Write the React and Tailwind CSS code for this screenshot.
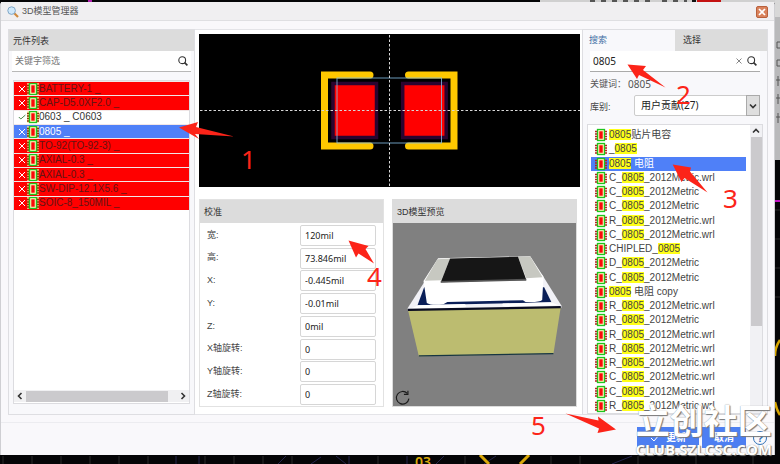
import React from "react";

const SANS = "font-['Liberation_Sans','Noto_Sans_CJK_SC',sans-serif]";
const HUMAN = "font-['Noto_Sans','Noto_Sans_CJK_SC',sans-serif]";

const parts = [
  { name: "BATTERY-1 _", state: "bad" },
  { name: "CAP-D5.0XF2.0 _", state: "bad" },
  { name: "0603 _ C0603", state: "ok" },
  { name: "0805 _", state: "active" },
  { name: "TO-92(TO-92-3) _", state: "bad" },
  { name: "AXIAL-0.3 _", state: "bad" },
  { name: "AXIAL-0.3 _", state: "bad" },
  { name: "SW-DIP-12.1X5.6 _", state: "bad" },
  { name: "SOIC-8_150MIL _", state: "bad" },
];

const rowTone = {
  bad: "bg-[#ff0000] text-[#641414]",
  ok: "bg-white text-[#333]",
  active: "bg-[#4f80f8] text-white",
};

const models = [
  ["", "贴片电容"],
  ["_", ""],
  ["", " 电阻"],
  ["C_", "_2012Metric.wrl"],
  ["C_", "_2012Metric"],
  ["C_", "_2012Metric"],
  ["R_", "_2012Metric.wrl"],
  ["C_", "_2012Metric.wrl"],
  ["CHIPLED_", ""],
  ["D_", "_2012Metric"],
  ["C_", "_2012Metric"],
  ["", " 电阻 copy"],
  ["R_", "_2012Metric.wrl"],
  ["R_", "_2012Metric"],
  ["R_", "_2012Metric.wrl"],
  ["R_", "_2012Metric.wrl"],
  ["R_", "_2012Metric.wrl"],
  ["C_", "_2012Metric.wrl"],
  ["C_", "_2012Metric.wrl"],
  ["R_", "_2012Metric.wrl"],
];

const fields = [
  ["宽:", "120mil"],
  ["高:", "73.846mil"],
  ["X:", "-0.445mil"],
  ["Y:", "-0.01mil"],
  ["Z:", "0mil"],
  ["X轴旋转:", "0"],
  ["Y轴旋转:", "0"],
  ["Z轴旋转:", "0"],
];

function Chip({ hollow }) {
  return (
    <svg viewBox="0 0 12 14" className="h-[14px] w-3 shrink-0" aria-hidden="true">
      {hollow && <rect y="1" width="12" height="12" fill="#ffe9a0" opacity=".7" />}
      <path d="M0 3.500h12M0 6h12M0 8.500h12M0 11h12" stroke={hollow ? "#8a3a00" : "#b5201c"} strokeWidth="1.300" />
      <rect x="2.500" y="1.500" width="7" height="11" fill="#fbf6b4" stroke="#1fc41f" strokeWidth="1.300" />
      <rect x="4.300" y="3.300" width="3.400" height="7.400" fill="#fa0a0a" />
    </svg>
  );
}

function Magnifier() {
  return (
    <svg viewBox="0 0 10 10" className="h-[10px] w-[10px] shrink-0" fill="none" stroke="#333" aria-hidden="true">
      <circle cx="4.200" cy="4.200" r="3.400" strokeWidth="1.100" />
      <path d="M6.600 6.600L9.400 9.400" strokeWidth="1.600" />
    </svg>
  );
}

function Chevron({ d, className }) {
  return (
    <svg viewBox="0 0 8 8" className={"h-2 w-2 " + className} fill="none" stroke="#333" strokeWidth="1.600" aria-hidden="true">
      <path d={d} />
    </svg>
  );
}

function Backdrop() {
  return (
    <svg className="absolute inset-0 h-full w-full" viewBox="0 0 780 464" preserveAspectRatio="none" aria-hidden="true">
      <rect width="780" height="464" fill="#050507" />
      <rect x="88" width="4" height="2" fill="#b020b0" />
      <rect x="540" width="240" height="3" fill="#d0d0d0" />
      <path d="M590 1h60M662 1h25" stroke="#555" strokeWidth="2" strokeDasharray="5 6" />
      <rect x="692" width="4" height="3" fill="#111" />
      <rect x="697" width="24" height="3" fill="#c41212" />
      <rect x="775" width="5" height="160" fill="#b9b9bb" />
      <rect x="775" width="5" height="17" fill="#d8d8d8" />
      <path d="M777 42h3M777 48h3M777 42v6M777 60h3M777 66h3M777 60v6M776 80h4M778 76v10M776 98h4M778 94v10M776 117h4M778 113v10" stroke="#555" />
      <path d="M775 201h5" stroke="#c313c3" strokeWidth="2" />
      <path d="M775 210h5M775 239h5M775 268h5M775 297h5M775 411h5" stroke="#2b2b2b" />
      <path d="M780 340Q775 347 775 356M775 402Q777 411 780 415" stroke="#d7a600" strokeWidth="2.500" fill="none" />
      <path d="M3 456v8M32 456v8M61 456v8M90 456v8M119 456v8M148 456v8M205 456v8M234 456v8M263 456v8M292 456v8M378 456v8M465 456v8M551 456v8M580 456v8M638 456v8M696 456v8M753 456v8" stroke="#2d2d2d" />
      <path d="M176 456v8M199 456v8M349 456v8M407 456v8M278 464l8-8M311 464l10-7M336 456l10 8M436 464l8-8M484 464l12-8M612 464l20-8" stroke="#26264e" />
      <path d="M480 455l9 9M520 464l9-9" stroke="#dba90a" strokeWidth="3" />
      <text x="415" y="467" fontFamily="Noto Sans, sans-serif" fontSize="14" fontWeight="600" fill="#dba90a">03</text>
    </svg>
  );
}

function PartList() {
  return (
    <section className="flex min-w-0 flex-col border border-[#dedee2] bg-[#f8f8fb]">
      <h2 className="h-[21px] bg-[#dcdcdc] pl-1 text-[9px] leading-[22px] text-[#333]">元件列表</h2>
      <div className="mx-[3px] flex h-[21px] items-center border-b border-[#b8b8b8] bg-white pr-[3px]">
        <input
          aria-label="关键字筛选"
          placeholder="关键字筛选"
          className="h-full min-w-0 flex-1 bg-transparent px-[3px] text-[9px] outline-none placeholder:text-[#777]"
        />
        <Magnifier />
      </div>
      <div className="mx-1 mt-2 mb-[10px] flex flex-1 flex-col border border-[#dcdce0] bg-white">
        <ul className="flex h-[129px] flex-col">
          {parts.map((p, i) => (
            <li key={i} className={"flex flex-1 items-center overflow-hidden border-t border-[#f2e6e6] text-[10px] leading-3 whitespace-pre " + rowTone[p.state]}>
              <svg viewBox="0 0 8 8" className="mr-px ml-1 h-2 w-2 shrink-0" fill="none" strokeWidth="1" stroke={p.state === "ok" ? "#4b8b4b" : "#fff"} aria-hidden="true">
                <path d={p.state === "ok" ? "M.8 4l2 2 4.600-4" : "M1 1l6 6M7 1l-6 6"} />
              </svg>
              <Chip hollow />
              {p.name}
            </li>
          ))}
        </ul>
        <div className="mt-auto mb-px flex h-3 items-center bg-[#f0f0f2]">
          <Chevron d="M5.500 1L2.500 4l3 3" className="mx-[2px]" />
          <div className="h-[11px] flex-1 bg-[#cbcacd]" />
          <Chevron d="M2.500 1l3 3-3 3" className="mr-[2px] ml-[11px]" />
        </div>
      </div>
    </section>
  );
}

function Footprint() {
  return (
    <svg viewBox="199 34 381 153" className="block w-full bg-black" role="img" aria-label="封装">
      <g fill="none" stroke="#ffc800" strokeWidth="7">
        <path d="M370 75H324.500V146H370" strokeLinecap="round" />
        <path d="M408.500 75H454V146H408.500" strokeLinecap="round" />
      </g>
      <g fill="#ff0000" stroke="#2b0430" strokeWidth="3.500">
        <rect x="333" y="83.500" width="43.500" height="54" />
        <rect x="402.700" y="83.500" width="43.500" height="54" />
      </g>
      <rect x="337" y="78" width="104.500" height="65" fill="none" stroke="#86bfe8" strokeOpacity=".8" />
      <path d="M200 110.500H580M389.500 35V187" stroke="#d8d8d8" strokeWidth="1" strokeDasharray="2.500 2" />
    </svg>
  );
}

function Calibration() {
  return (
    <section className="min-w-0 border border-[#e2e2e2] bg-white">
      <h2 className="h-[23px] bg-[#dcdcdc] pl-1 text-[9px] leading-6 text-[#333]">校准</h2>
      <div className="flex h-[183px] flex-col pt-px pr-[7px] pl-[7px]">
        {fields.map(([label, value], i) => (
          <div key={label} className="flex flex-1 items-center">
            <label htmlFor={"field" + i} className="flex-1 text-[9px] text-[#444]">{label}</label>
            <input
              id={"field" + i}
              defaultValue={value}
              className={"h-[21px] w-[76px] rounded-[2px] border border-[#d6d6d6] bg-white px-1 text-[9px] text-[#222] outline-none " + HUMAN}
            />
          </div>
        ))}
      </div>
    </section>
  );
}

function Preview() {
  return (
    <section className="min-w-0 border border-[#dcdcdc] bg-[#808080]">
      <h2 className="h-[23px] bg-[#dcdcdc] pl-1 text-[9px] leading-6 text-[#333]">3D模型预览</h2>
      <svg viewBox="24 86 552 552" className="block w-full" role="img" aria-label="3D模型预览">
        <rect x="24" y="86" width="552" height="552" fill="#808080" />
        <path d="M68 343L120 262L155 242H474L532 335V342L70 350Z" fill="#f1f1f6" />
        <path d="M98 334L118 280H480L502 325Z" fill="#0a1f58" />
        <path d="M100 334L240 330Q250 336 240 341L78 344ZM356 329L500 325L524 334L362 338Q348 334 356 329Z" fill="#fff" />
        <path d="M116 261L160 192L438 186L478 248L474 318Q465 326 424 324L416 319L188 324L176 331Q140 336 126 327Z" fill="#fff" />
        <path d="M120 260L158 195L196 193L170 259Z" fill="#c7c8c1" />
        <path d="M401 188L438 187L475 250L426 253Z" fill="#c7c8c1" />
        <path d="M196 193L401 188L426 257L168 265Z" fill="#161616" />
        <path d="M168 261L426 254V260L168 266Z" fill="#555" />
        <path d="M69 348L530 339L508 480L102 488Z" fill="#bcbc70" />
        <path d="M69 348L530 340" stroke="#080b20" strokeWidth="7" />
        <path d="M102 487L508 480" stroke="#173642" strokeWidth="4" />
        <g fill="none" stroke="#1b1b1b" strokeWidth="3.500">
          <path d="M67 600A19 19 0 1 0 72 616" />
          <path d="M69 592V603H57" />
        </g>
      </svg>
    </section>
  );
}

function SearchPanel() {
  return (
    <section className="flex min-w-0 flex-col border border-[#dedee2] bg-[#f8f8fb]">
      <div className="grid h-[21px] grid-cols-2 text-[9px]">
        <button className="pl-[6px] text-left text-[#3f6fa5]">搜索</button>
        <button className="bg-[#dcdcdc] pl-2 text-left text-[#333]">选择</button>
      </div>
      <div className="mx-[7px] flex h-[21px] items-center gap-[5px] border-b border-[#aaa] bg-white pr-[3px]">
        <input aria-label="搜索" defaultValue="0805" className={"h-full min-w-0 flex-1 bg-transparent pl-[3px] text-[10px] text-[#222] outline-none " + HUMAN} />
        <button aria-label="清除">
          <svg viewBox="0 0 6 6" className="h-[6px] w-[6px]" stroke="#666" strokeWidth=".8"><path d="M.5.5l5 5M5.500.5l-5 5" /></svg>
        </button>
        <Magnifier />
      </div>
      <p className={"mx-[7px] flex h-[23px] items-center pt-px text-[10px] text-[#555] " + HUMAN}>
        <span className="w-[38px] text-[9px]">关键词：</span>0805
      </p>
      <div className="mx-[7px] flex h-[21px]">
        <label htmlFor="library" className="w-[44px] pt-[6px] text-[9px] leading-3 text-[#444]">库别:</label>
        <div className="relative h-[21px] min-w-0 flex-1">
          <select id="library" className={"block h-full w-full appearance-none rounded-[2px] border border-[#ccc] bg-white pl-[6px] text-[10px] text-[#222] " + HUMAN}>
            <option>用户贡献(27)</option>
          </select>
          <span className="pointer-events-none absolute inset-y-0 right-0 flex w-[14px] items-center justify-center border border-[#aaa] bg-[#dedede]">
            <Chevron d="M1 2.500l3 3 3-3" className="" />
          </span>
        </div>
      </div>
      <div className="mx-1 mt-2 flex flex-1 border border-[#dcdce0] bg-white">
        <ul className="mt-[3px] mr-1 ml-[3px] flex h-[285px] min-w-0 flex-1 flex-col">
          {models.map(([before, after], i) => (
            <li
              key={i}
              className={"flex min-h-0 flex-1 items-center gap-[2px] pl-1 text-[10px] leading-3 " + (i === 2 ? "bg-[#4f80f8] text-white" : "text-[#444]")}
            >
              <Chip />
              <span className="whitespace-pre">
                {before}
                <mark className="bg-[#ffff18] text-[#444]">0805</mark>
                {after}
              </span>
            </li>
          ))}
        </ul>
        <div className="flex w-3 flex-col items-center bg-[#f1f1f4]">
          <Chevron d="M1 5.500l3-3 3 3" className="my-[2px]" />
          <div className="h-[189px] w-[11px] bg-[#cbcacd]" />
        </div>
      </div>
    </section>
  );
}

function Annotations() {
  return (
    <svg className="pointer-events-none absolute top-0 left-0 h-[464px] w-[780px]" viewBox="0 0 780 464">
      <g fill="#fc2419">
        <path d="M179 127.500L198 122L196 127L234 136.500L195 134L199 139Z" />
        <path d="M627.500 64.500L646 66L643 70L665.500 87.500L639 75L637 79Z" />
        <path d="M672.700 164.500L691 167.500L690 171.500L707.500 192.500L684.500 178L681.500 182Z" />
        <path d="M348.500 240.500L368.500 246L365.500 249L374 263.500L358.500 253.500L356 257.500Z" />
        <path d="M565.500 413.500L598.500 420.500L598 416.500L616 429.500L597.500 433L599 428.500Z" />
      </g>
      <g fill="#fc2419" fontSize="26" fontFamily="Noto Sans, sans-serif">
        <text x="241" y="169">1</text>
        <text x="676" y="104">2</text>
        <text x="723" y="208">3</text>
        <text x="367" y="286">4</text>
        <text x="531" y="435">5</text>
      </g>
    </svg>
  );
}

export default function App() {
  return (
    <div className={"relative min-h-screen overflow-hidden pt-[2px] pr-[5px] pb-[9px] " + SANS}>
      <Backdrop />
      <main className="relative rounded-t-[3px] border-x border-[#cfcfd3] bg-[#f9f8fb]">
        <header className="flex h-[19px] items-center border-b border-[#dfdfe2] bg-[#f0eff1] pt-px pr-[6px] pl-[6px]">
          <svg viewBox="0 0 12 12" className="h-3 w-3" aria-hidden="true">
            <path d="M7 7l4 4" stroke="#cf8a3c" strokeWidth="2.200" />
            <circle cx="4.600" cy="4.600" r="3.800" fill="#cfe8fb" stroke="#7fa6c6" />
          </svg>
          <h1 className="ml-[3px] flex-1 pt-px text-[9px] text-[#555]">3D模型管理器</h1>
          <button aria-label="关闭" className="flex h-3 w-3 items-center justify-center rounded-[2px] border border-[#b9603c] bg-[#d9825c]">
            <svg viewBox="0 0 8 8" className="h-2 w-2" stroke="#fff" strokeWidth="1.700"><path d="M1 1l6 6M7 1l-6 6" /></svg>
          </button>
        </header>
        <div className="grid grid-cols-[187fr_387fr_186fr] pt-2 pr-[6px] pl-[7px]">
          <PartList />
          <div className="flex min-w-0 flex-col border-y border-[#e4e4e8] bg-white pt-1 pr-[2px] pl-1">
            <Footprint />
            <div className="mt-3 grid grid-cols-2 gap-2 pr-[3px]">
              <Calibration />
              <Preview />
            </div>
          </div>
          <SearchPanel />
        </div>
        <footer className="mt-[7px] flex h-[33px] items-start justify-end border-t border-[#ececf0] pt-1 pr-[7px]">
          <button className="mr-[3px] flex h-[21px] w-[62px] items-center justify-center gap-[6px] bg-[#4d7ff2] text-[10px] font-bold text-white">
            <svg viewBox="0 0 10 8" className="h-2 w-[10px]" fill="none" stroke="#fff"><path d="M1 4l3 3 5-6" /></svg>
            更新
          </button>
          <button className="h-[21px] w-[44px] bg-[#4d7ff2] text-[10px] font-bold text-white">取消</button>
          <button aria-label="帮助" className="mt-1 ml-[7px] h-[14px] w-[14px] rounded-full border border-[#2f72b8] text-[11px] leading-3 font-bold text-[#2f72b8]">?</button>
        </footer>
      </main>
      <Annotations />
      <div className="pointer-events-none absolute right-2 bottom-[6px] text-center font-bold text-white [text-shadow:1px_1px_1px_#777,0_0_1px_#888]">
        <p className="text-[34px] leading-9">立创社区</p>
        <p className="font-['Open_Sans',sans-serif] text-[15px] leading-[18px]">CLUB.SZLCSC.COM</p>
      </div>
    </div>
  );
}
